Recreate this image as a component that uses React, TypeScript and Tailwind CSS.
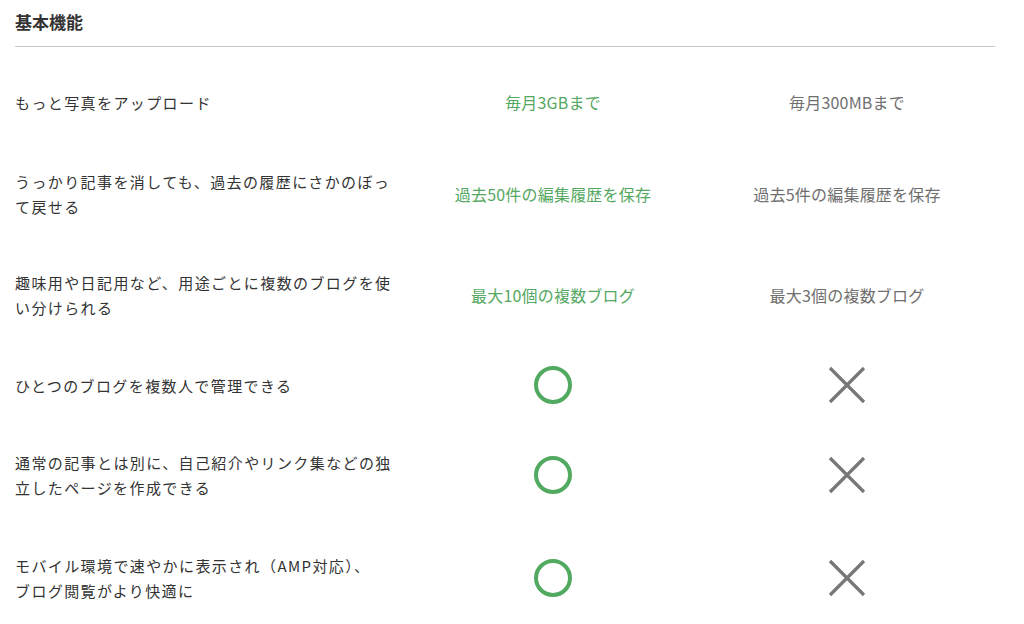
import type { ReactNode } from "react"

const rows: { label: ReactNode, pro: string | null, free: string | null, h: string }[] = [
  { label: "もっと写真をアップロード", pro: "毎月3GBまで", free: "毎月300MBまで", h: "h-[92px]" },
  { label: "うっかり記事を消しても、過去の履歴にさかのぼって戻せる", pro: "過去50件の編集履歴を保存", free: "過去5件の編集履歴を保存", h: "h-[92px]" },
  { label: "趣味用や日記用など、用途ごとに複数のブログを使い分けられる", pro: "最大10個の複数ブログ", free: "最大3個の複数ブログ", h: "h-[110px]" },
  { label: "ひとつのブログを複数人で管理できる", pro: null, free: null, h: "h-[70px]" },
  { label: "通常の記事とは別に、自己紹介やリンク集などの独立したページを作成できる", pro: null, free: null, h: "h-[110px]" },
  { label: <>モバイル環境で速やかに表示され（AMP対応）、<br />ブログ閲覧がより快適に</>, pro: null, free: null, h: "h-[96px]" },
]

function Circle() {
  return (
    <svg width="40" height="40" viewBox="0 0 40 40">
      <circle cx="20" cy="20" r="17" fill="none" stroke="#52a960" strokeWidth="4" />
    </svg>
  )
}

function Cross() {
  return (
    <svg width="38" height="38" viewBox="0 0 38 38">
      <path d="M2 2 L36 36 M36 2 L2 36" stroke="#777" strokeWidth="3.2" fill="none" />
    </svg>
  )
}

export default function App() {
  return (
    <div className="w-[1024px] h-[624px] overflow-hidden bg-white px-[15px] text-[#333] font-['Noto_Sans_CJK_JP','Noto_Sans_CJK_SC',sans-serif]">
      <h2 className="pt-[9px] pb-[11px] text-[17px] font-bold leading-[26px] border-b border-[#c8c8c8] w-[980px]">
        基本機能
      </h2>
      <div className="h-[9px]" />
      {rows.map((row, i) => (
        <div key={i} className={`grid grid-cols-[392px_292px_296px] items-center ${row.h}`}>
          <div className="w-[386px] text-[15px] leading-[25px] tracking-[1.4px]">{row.label}</div>
          <div className="flex justify-center text-[16px] text-[#55a862] tracking-[0.2px]">
            {row.pro ? row.pro : <Circle />}
          </div>
          <div className="flex justify-center text-[16px] text-[#6f6f6f] tracking-[0.2px]">
            {row.free ? row.free : <Cross />}
          </div>
        </div>
      ))}
    </div>
  )
}
